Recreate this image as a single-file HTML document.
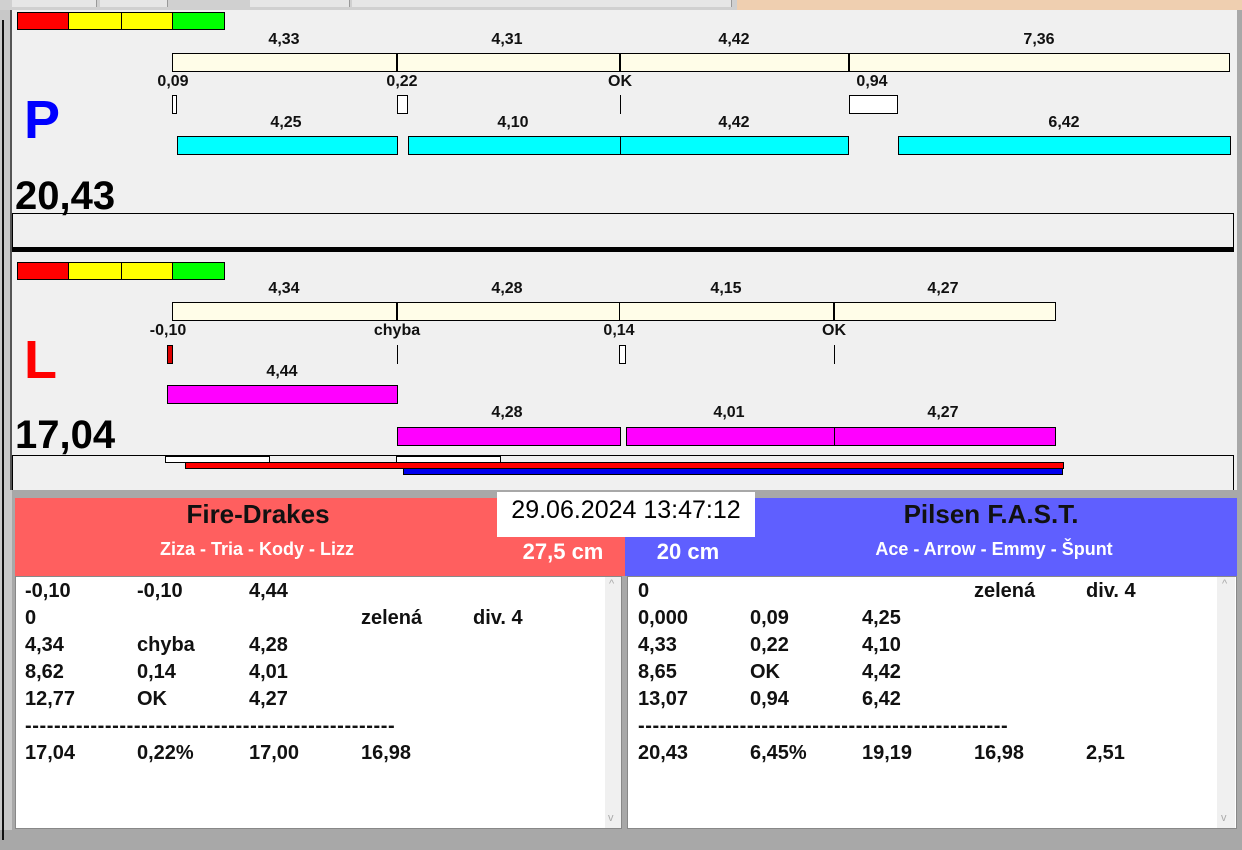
<!DOCTYPE html>
<html><head><meta charset="utf-8"><style>
*{margin:0;padding:0;box-sizing:border-box}
body{width:1242px;height:850px;position:relative;overflow:hidden;background:#a8a8a8;font-family:"Liberation Sans",Arial,sans-serif}
div{position:absolute}
.t{font-weight:bold;font-size:16px;color:#111;transform:translateX(-50%);white-space:nowrap;line-height:16px}
.b{border:1px solid #000}
.y{background:#fffde8}
.c{background:#00ffff}
.m{background:#ff00ff}
.r{font-weight:bold;font-size:20px;color:#111;line-height:27px;white-space:pre}
</style></head><body>
<!-- top strip -->
<div style="left:0;top:0;width:1242px;height:10px;background:#d0d0d0"></div>
<div style="left:12px;top:0;width:85px;height:7px;background:#e6e6e6;border-right:1px solid #999"></div>
<div style="left:100px;top:0;width:68px;height:7px;background:#e6e6e6;border-right:1px solid #999"></div>
<div style="left:250px;top:0;width:100px;height:7px;background:#e6e6e6;border-right:1px solid #999"></div>
<div style="left:352px;top:0;width:380px;height:7px;background:#e6e6e6;border-right:1px solid #999"></div>
<div style="left:737px;top:0;width:505px;height:11px;background:#efcfb0"></div>
<!-- left strip -->
<div style="left:0;top:10px;width:12px;height:820px;background:#c8c8c8"></div>
<div style="left:2px;top:20px;width:2px;height:820px;background:#111"></div>
<div style="left:10px;top:10px;width:2px;height:480px;background:#555"></div>
<div style="left:1237px;top:10px;width:5px;height:840px;background:#a8a8a8"></div>

<!-- P panel -->
<div style="left:12px;top:10px;width:1225px;height:480px;background:#f0f0f0"></div>
<div style="left:17px;top:12px;width:52px;height:18px;background:#f00" class="b"></div>
<div style="left:68px;top:12px;width:54px;height:18px;background:#ff0" class="b"></div>
<div style="left:121px;top:12px;width:52px;height:18px;background:#ff0" class="b"></div>
<div style="left:172px;top:12px;width:53px;height:18px;background:#0f0" class="b"></div>

<div class="y b" style="left:172px;top:53px;width:1058px;height:19px"></div>
<div style="left:396px;top:53px;width:2px;height:19px;background:#000"></div>
<div style="left:619px;top:53px;width:2px;height:19px;background:#000"></div>
<div style="left:848px;top:53px;width:2px;height:19px;background:#000"></div>
<div class="t" style="left:284px;top:32px">4,33</div>
<div class="t" style="left:507px;top:32px">4,31</div>
<div class="t" style="left:734px;top:32px">4,42</div>
<div class="t" style="left:1039px;top:32px">7,36</div>
<div class="t" style="left:173px;top:74px">0,09</div>
<div class="t" style="left:402px;top:74px">0,22</div>
<div class="t" style="left:620px;top:74px">OK</div>
<div class="t" style="left:872px;top:74px">0,94</div>
<div class="b" style="left:172px;top:95px;width:5px;height:19px;background:#fff"></div>
<div class="b" style="left:397px;top:95px;width:11px;height:19px;background:#fff"></div>
<div style="left:620px;top:95px;width:1px;height:19px;background:#000"></div>
<div class="b" style="left:849px;top:95px;width:49px;height:19px;background:#fff"></div>
<div class="t" style="left:286px;top:115px">4,25</div>
<div class="t" style="left:513px;top:115px">4,10</div>
<div class="t" style="left:734px;top:115px">4,42</div>
<div class="t" style="left:1064px;top:115px">6,42</div>
<div class="c b" style="left:177px;top:136px;width:221px;height:19px"></div>
<div class="c b" style="left:408px;top:136px;width:213px;height:19px"></div>
<div class="c b" style="left:620px;top:136px;width:229px;height:19px"></div>
<div class="c b" style="left:898px;top:136px;width:333px;height:19px"></div>
<div style="left:24px;top:90px;font-size:54px;font-weight:bold;color:#0000ff;line-height:60px">P</div>
<div style="left:15px;top:175px;font-size:40px;font-weight:bold;color:#000;line-height:42px">20,43</div>
<div style="left:12px;top:213px;width:1222px;height:35px;border-top:1px solid #000;border-right:1px solid #000;border-left:1px solid #000"></div>
<div style="left:12px;top:247px;width:1222px;height:5px;background:#000"></div>

<!-- L panel -->
<div style="left:17px;top:262px;width:52px;height:18px;background:#f00" class="b"></div>
<div style="left:68px;top:262px;width:54px;height:18px;background:#ff0" class="b"></div>
<div style="left:121px;top:262px;width:52px;height:18px;background:#ff0" class="b"></div>
<div style="left:172px;top:262px;width:53px;height:18px;background:#0f0" class="b"></div>
<div class="y b" style="left:172px;top:302px;width:884px;height:19px"></div>
<div style="left:396px;top:302px;width:2px;height:19px;background:#000"></div>
<div style="left:619px;top:302px;width:1px;height:19px;background:#000"></div>
<div style="left:833px;top:302px;width:2px;height:19px;background:#000"></div>
<div class="t" style="left:284px;top:281px">4,34</div>
<div class="t" style="left:507px;top:281px">4,28</div>
<div class="t" style="left:726px;top:281px">4,15</div>
<div class="t" style="left:943px;top:281px">4,27</div>
<div class="t" style="left:168px;top:323px">-0,10</div>
<div class="t" style="left:397px;top:323px">chyba</div>
<div class="t" style="left:619px;top:323px">0,14</div>
<div class="t" style="left:834px;top:323px">OK</div>
<div class="b" style="left:167px;top:345px;width:6px;height:19px;background:#d00"></div>
<div style="left:397px;top:345px;width:1px;height:19px;background:#000"></div>
<div class="b" style="left:619px;top:345px;width:7px;height:19px;background:#fff"></div>
<div style="left:834px;top:345px;width:1px;height:19px;background:#000"></div>
<div class="t" style="left:282px;top:364px">4,44</div>
<div class="m b" style="left:167px;top:385px;width:231px;height:19px"></div>
<div class="t" style="left:507px;top:405px">4,28</div>
<div class="t" style="left:729px;top:405px">4,01</div>
<div class="t" style="left:943px;top:405px">4,27</div>
<div class="m b" style="left:397px;top:427px;width:224px;height:19px"></div>
<div class="m b" style="left:626px;top:427px;width:430px;height:19px"></div>
<div style="left:834px;top:427px;width:1px;height:19px;background:#000"></div>
<div style="left:24px;top:330px;font-size:54px;font-weight:bold;color:#ff0000;line-height:60px">L</div>
<div style="left:15px;top:414px;font-size:40px;font-weight:bold;color:#000;line-height:42px">17,04</div>
<div style="left:12px;top:455px;width:1222px;height:35px;border-top:1px solid #000;border-right:1px solid #000;border-left:1px solid #000"></div>
<div class="b" style="left:165px;top:456px;width:105px;height:7px;background:#fff"></div>
<div class="b" style="left:396px;top:456px;width:105px;height:7px;background:#fff"></div>
<div class="b" style="left:185px;top:462px;width:879px;height:7px;background:#f00"></div>
<div class="b" style="left:403px;top:468px;width:660px;height:7px;background:#0000ee"></div>

<!-- bottom -->
<div style="left:12px;top:490px;width:1225px;height:340px;background:#a8a8a8"></div>
<div style="left:15px;top:498px;width:611px;height:78px;background:#ff5f5f"></div>
<div style="left:625px;top:498px;width:612px;height:78px;background:#5f5fff"></div>
<div style="left:497px;top:492px;width:258px;height:45px;background:#fff"></div>
<div style="left:626px;top:496px;font-size:25px;color:#000;transform:translateX(-50%);white-space:nowrap;line-height:28px">29.06.2024 13:47:12</div>
<div class="t" style="left:258px;top:500px;font-size:26px;line-height:28px">Fire-Drakes</div>
<div class="t" style="left:257px;top:539px;font-size:18px;line-height:20px;color:#fff">Ziza - Tria - Kody - Lizz</div>
<div class="t" style="left:563px;top:540px;font-size:22px;line-height:24px;color:#fff">27,5 cm</div>
<div class="t" style="left:688px;top:540px;font-size:22px;line-height:24px;color:#fff">20 cm</div>
<div class="t" style="left:991px;top:500px;font-size:26px;line-height:28px">Pilsen F.A.S.T.</div>
<div class="t" style="left:994px;top:539px;font-size:18px;line-height:20px;color:#fff">Ace - Arrow - Emmy - Špunt</div>

<div style="left:15px;top:576px;width:607px;height:253px;background:#fff;border:1px solid #888"></div>
<div style="left:605px;top:577px;width:16px;height:251px;background:#f0f0f0"></div>
<div style="left:609px;top:578px;font-size:11px;color:#aaa">^</div>
<div style="left:608px;top:812px;font-size:11px;color:#aaa">v</div>
<div style="left:627px;top:576px;width:610px;height:253px;background:#fff;border:1px solid #888"></div>
<div style="left:1217px;top:577px;width:18px;height:251px;background:#f0f0f0"></div>
<div style="left:1222px;top:578px;font-size:11px;color:#aaa">^</div>
<div style="left:1221px;top:812px;font-size:11px;color:#aaa">v</div>

<div class="r" style="left:25px;top:578px">-0,10
0
4,34
8,62
12,77
<span style="letter-spacing:0.6px">---------------------------------------------------</span>
17,04</div>
<div class="r" style="left:137px;top:578px">-0,10

chyba
0,14
OK

0,22%</div>
<div class="r" style="left:249px;top:578px">4,44

4,28
4,01
4,27

17,00</div>
<div class="r" style="left:361px;top:578px">
zelená




16,98</div>
<div class="r" style="left:473px;top:578px">
div. 4</div>

<div class="r" style="left:638px;top:578px">0
0,000
4,33
8,65
13,07
<span style="letter-spacing:0.6px">---------------------------------------------------</span>
20,43</div>
<div class="r" style="left:750px;top:578px">
0,09
0,22
OK
0,94

6,45%</div>
<div class="r" style="left:862px;top:578px">
4,25
4,10
4,42
6,42

19,19</div>
<div class="r" style="left:974px;top:578px">zelená





16,98</div>
<div class="r" style="left:1086px;top:578px">div. 4





2,51</div>
</body></html>
